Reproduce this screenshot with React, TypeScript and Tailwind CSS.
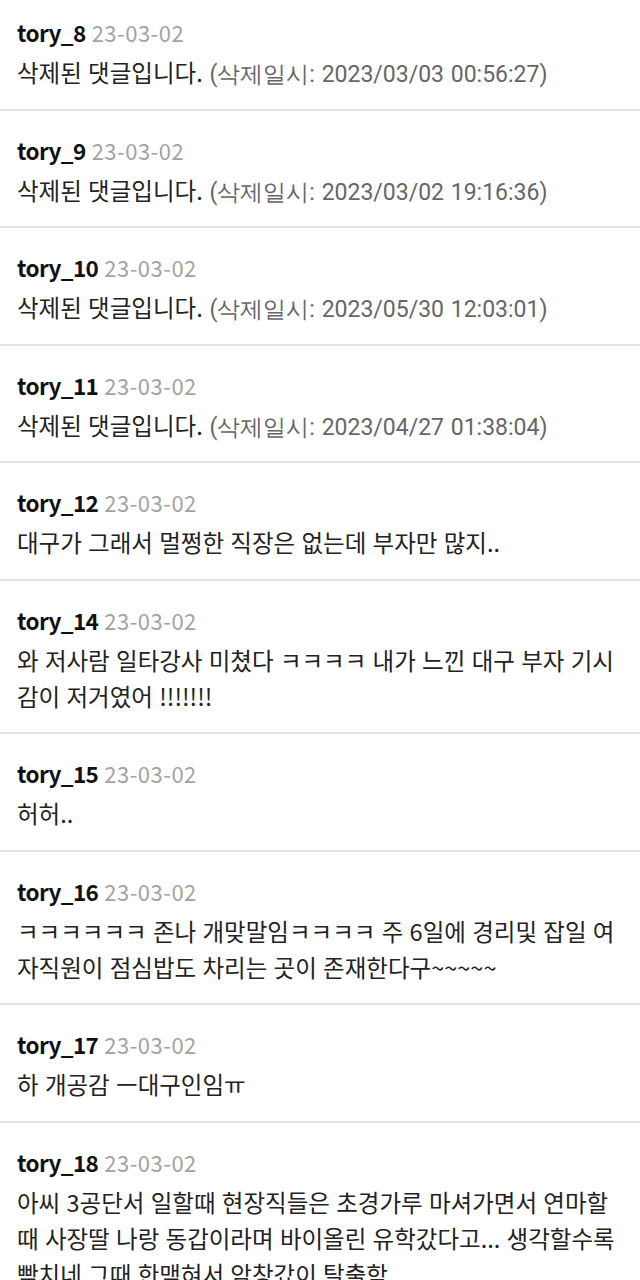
const COMMENTS = [
  { id: 8, lines: ["삭제된 댓글입니다."], deletedAt: "2023/03/03 00:56:27" },
  { id: 9, lines: ["삭제된 댓글입니다."], deletedAt: "2023/03/02 19:16:36" },
  { id: 10, lines: ["삭제된 댓글입니다."], deletedAt: "2023/05/30 12:03:01" },
  { id: 11, lines: ["삭제된 댓글입니다."], deletedAt: "2023/04/27 01:38:04" },
  { id: 12, lines: ["대구가 그래서 멀쩡한 직장은 없는데 부자만 많지.."] },
  {
    id: 14,
    lines: ["와 저사람 일타강사 미쳤다 ㅋㅋㅋㅋ 내가 느낀 대구 부자 기시", "감이 저거였어 !!!!!!!"],
  },
  { id: 15, lines: ["허허.."] },
  {
    id: 16,
    lines: ["ㅋㅋㅋㅋㅋㅋ 존나 개맞말임ㅋㅋㅋㅋ 주 6일에 경리및 잡일 여", "자직원이 점심밥도 차리는 곳이 존재한다구~~~~~"],
  },
  { id: 17, lines: ["하 개공감 ㅡ대구인임ㅠ"] },
  {
    id: 18,
    lines: [
      "아씨 3공단서 일할때 현장직들은 초경가루 마셔가면서 연마할",
      "때 사장딸 나랑 동갑이라며 바이올린 유학갔다고... 생각할수록",
      "빡치네 그때 한맥혀서 암창갔이 탈출함",
    ],
  },
]

const FONT = "font-['Noto_Sans_CJK_KR','Noto_Sans',sans-serif]"

function Comment({ c, first }: { c: (typeof COMMENTS)[number]; first: boolean }) {
  return (
    <div className={`border-b-2 border-[#e2e2e2] px-[17px] pb-[18.5px] ${first ? "pt-[13px]" : "pt-[20px]"}`}>
      <div className="flex items-baseline h-[38px] leading-[38px] mb-[3px] overflow-visible">
        <span className="text-[22.5px] font-bold text-[#111] tracking-[-0.6px]">tory_{c.id}</span>
        <span className="ml-[6px] text-[22px] text-[#a3a3a3] tracking-[0.5px]">23-03-02</span>
      </div>
      {c.lines.map((line, i) => (
        <div key={i} className="h-[36px] text-[23.5px] leading-[36px] text-[#222] whitespace-nowrap [word-spacing:1px]">
          {line}
          {c.deletedAt && (
            <span className="text-[#666] text-[23px] font-['Roboto',sans-serif]">
              {" "}(삭제일시: {c.deletedAt})
            </span>
          )}
        </div>
      ))}
    </div>
  )
}

export default function App() {
  return (
    <div className={`w-[640px] h-[1280px] overflow-hidden bg-white ${FONT}`}>
      {COMMENTS.map((c, i) => (
        <Comment key={c.id} c={c} first={i === 0} />
      ))}
    </div>
  )
}
